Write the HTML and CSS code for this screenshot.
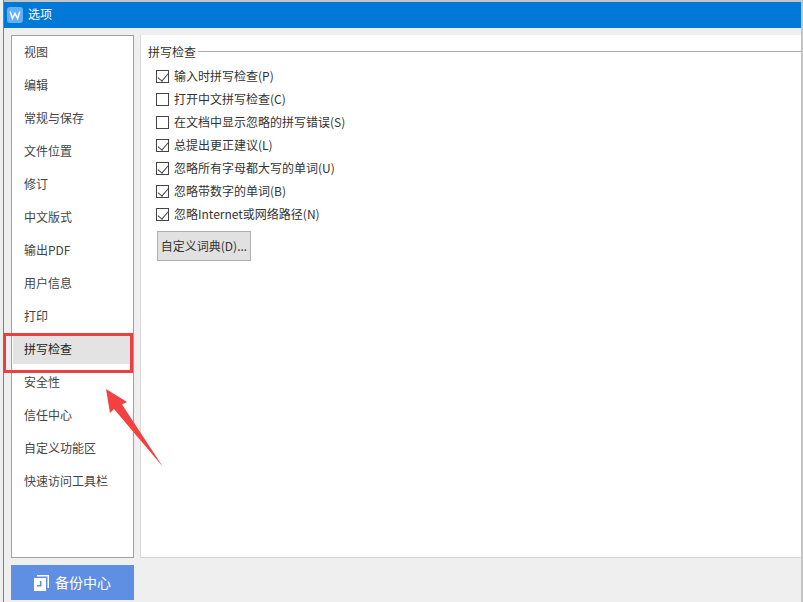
FILE: index.html
```html
<!DOCTYPE html>
<html lang="zh-CN">
<head>
<meta charset="utf-8">
<title>选项</title>
<link rel="stylesheet" href="styles.css">
</head>
<body>
<div class="dialog">
  <header class="titlebar">
    <svg class="logo" viewBox="0 0 16 16" aria-hidden="true">
      <rect width="16" height="16" rx="3" fill="#62b1f6"/>
      <path d="M3.2 4.5 5.4 11.5 8 6.5 10.6 11.5 12.8 4.5" fill="none" stroke="#fff" stroke-width="1.5"/>
    </svg>
    <span>选项</span>
  </header>
  <div class="main">
    <div class="left">
      <nav class="nav">
        <div class="nav-item">视图</div>
        <div class="nav-item">编辑</div>
        <div class="nav-item">常规与保存</div>
        <div class="nav-item">文件位置</div>
        <div class="nav-item">修订</div>
        <div class="nav-item">中文版式</div>
        <div class="nav-item">输出PDF</div>
        <div class="nav-item">用户信息</div>
        <div class="nav-item">打印</div>
        <div class="nav-item active">拼写检查</div>
        <div class="nav-item">安全性</div>
        <div class="nav-item">信任中心</div>
        <div class="nav-item">自定义功能区</div>
        <div class="nav-item">快速访问工具栏</div>
      </nav>
      <div class="backup">
        <svg class="backup-icon" viewBox="0 0 15 16" aria-hidden="true">
          <path d="M3 0H15V13H13.5V1.5H3Z" fill="#fff"/>
          <path d="M0 3H12V16H0ZM6 6V10H3V11.5H7.5V6Z" fill="#fff" fill-rule="evenodd"/>
        </svg>
        <span class="backup-label">备份中心</span>
      </div>
    </div>
    <section class="panel">
      <div class="legend"><span>拼写检查</span><i class="rule"></i></div>
      <div class="checks">
        <label class="row"><span class="box on"></span>输入时拼写检查(P)</label>
        <label class="row"><span class="box"></span>打开中文拼写检查(C)</label>
        <label class="row"><span class="box"></span>在文档中显示忽略的拼写错误(S)</label>
        <label class="row"><span class="box on"></span>总提出更正建议(L)</label>
        <label class="row"><span class="box on"></span>忽略所有字母都大写的单词(U)</label>
        <label class="row"><span class="box on"></span>忽略带数字的单词(B)</label>
        <label class="row"><span class="box on"></span>忽略Internet或网络路径(N)</label>
      </div>
      <button class="dict" type="button">自定义词典(D)...</button>
    </section>
  </div>
</div>
<div class="callout"></div>
<svg class="arrow" viewBox="0 0 803 602" aria-hidden="true">
  <path d="M106 389 127 402 122 404.5 163 467 114 409 110 413Z" fill="#f4403f"/>
</svg>
</body>
</html>
```
FILE: styles.css
```css
* { box-sizing: border-box; }
html, body { margin: 0; height: 602px; overflow: hidden; }
body {
  position: relative;
  background: #efefef;
  font-family: "Noto Sans CJK SC", "Liberation Sans", sans-serif;
  font-size: 12px;
  color: #333;
}
.dialog {
  height: 602px;
  margin-left: 3px;
  padding-top: 2px;
  border-left: 1px solid #3f8fd8;
  border-right: 2px solid #c4c4c4;
  box-shadow: 0 2px 0 #c4c4c4 inset;
  display: flex;
  flex-direction: column;
}
.titlebar {
  height: 26px;
  flex: none;
  background: #0078d7;
  color: #fff;
  font-size: 12px;
  line-height: 24px;
  display: flex;
  align-items: center;
  gap: 5px;
  padding-left: 3px;
}
.titlebar span { height: 24px; margin-top: -2px; }
.logo { width: 16px; height: 16px; }
.main {
  flex: 1;
  display: flex;
  gap: 6px;
  padding: 7px 0 2px 7px;
}
.left {
  width: 123px;
  flex: none;
  display: flex;
  flex-direction: column;
  gap: 7px;
}
.nav {
  height: 523px;
  background: #fff;
  border: 1px solid #a0a0a0;
}
.nav-item {
  height: 33px;
  line-height: 31px;
  padding-left: 12px;
  color: #444;
}
.nav-item.active {
  height: 31px;
  background: #e3e3e3;
  margin: 0 2px 2px 1px;
  padding-left: 11px;
  color: #222;
}
.backup {
  height: 35px;
  background: #5f8fe2;
  color: #fff;
  font-size: 14px;
  display: flex;
  align-items: center;
  justify-content: center;
  gap: 6px;
}
.backup-label { line-height: 18px; margin-top: -2px; }
.backup-icon { width: 15px; height: 16px; }
.panel {
  flex: 1;
  height: 523px;
  background: #fff;
  border-bottom: 1px solid #d4d4d4;
  border-left: 1px solid #d8d8d8;
  padding: 7px 0 0 7px;
}
.legend {
  display: flex;
  align-items: center;
  gap: 2px;
  height: 18px;
}
.rule { flex: 1; height: 1px; background: #a8a8a8; }
.checks {
  margin: 4px 0 0 8px;
  display: flex;
  flex-direction: column;
}
.row {
  height: 23px;
  display: flex;
  align-items: center;
  gap: 5px;
}
.box {
  width: 13px;
  height: 13px;
  margin-top: 2px;
  border: 1px solid #444;
  background: #fff;
  position: relative;
}
.box.on::after {
  content: "";
  position: absolute;
  left: 3px;
  top: 0;
  width: 5px;
  height: 9px;
  border: solid #444;
  border-width: 0 1px 1px 0;
  transform: rotate(40deg);
}
.dict {
  display: block;
  margin: 6px 0 0 9px;
  width: 94px;
  height: 30px;
  padding: 0 0 2px;
  background: #e1e1e1;
  border: 1px solid #adadad;
  font: inherit;
  color: #333;
}
.callout {
  position: absolute;
  left: 3px;
  top: 333px;
  width: 130px;
  height: 40px;
  border: 3px solid #ea4042;
}
.arrow {
  position: absolute;
  left: 0;
  top: 0;
  width: 803px;
  height: 602px;
  pointer-events: none;
}
```
